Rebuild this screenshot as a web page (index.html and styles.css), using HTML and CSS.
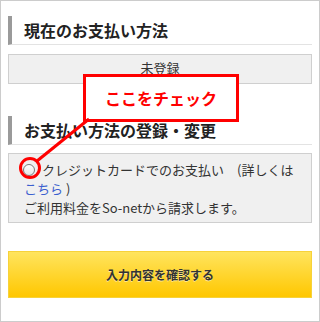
FILE: index.html
```html
<!DOCTYPE html>
<html lang="ja">
<head>
<meta charset="utf-8">
<link rel="stylesheet" href="styles.css">
</head>
<body>
<div class="page">
  <h2 class="heading">現在のお支払い方法</h2>
  <div class="current">未登録</div>

  <h2 class="heading second">お支払い方法の登録・変更</h2>
  <div class="methods">
    <label class="option"><span class="radio"></span><span>クレジットカードでのお支払い　(詳しくは <a class="link" href="#">こちら</a> )</span></label>
    <p class="note">ご利用料金をSo-netから請求します。</p>
  </div>

  <button class="submit" type="button">入力内容を確認する</button>

  <div class="callout">ここをチェック</div>
  <svg class="pointer" width="320" height="322" viewBox="0 0 320 322">
    <line x1="37" y1="161" x2="89" y2="119" stroke="#ff0000" stroke-width="3"/>
    <circle cx="30" cy="168" r="9.5" fill="none" stroke="#ff0000" stroke-width="3"/>
  </svg>
</div>
</body>
</html>
```
FILE: styles.css
```css
html, body {
  margin: 0;
  padding: 0;
  background: #fff;
}
.page {
  position: relative;
  width: 320px;
  height: 322px;
  box-sizing: border-box;
  border: 1px solid #cccccc;
  padding: 15px 7px 0;
  font-family: "Noto Sans CJK JP", "Noto Sans", sans-serif;
  color: #333;
  display: flex;
  flex-direction: column;
}
.heading {
  margin: 0;
  height: 29px;
  box-sizing: border-box;
  border-left: 4px solid #9a9a9a;
  border-bottom: 1px solid #e3e3e3;
  padding-left: 12px;
  font-size: 16px;
  font-weight: bold;
  line-height: 28px;
  color: #222;
}
.heading.second {
  margin-top: 32px;
}
.current {
  margin-top: 9px;
  height: 30px;
  box-sizing: border-box;
  border: 1px solid #cfcfcf;
  background: #f0f0f0;
  text-align: center;
  font-size: 13px;
  line-height: 25px;
  color: #333;
}
.methods {
  margin-top: 8px;
  height: 70px;
  box-sizing: border-box;
  border: 1px solid #cfcfcf;
  background: #f0f0f0;
  padding: 6px 12px 0 15px;
  font-size: 13px;
  line-height: 19px;
}
.option {
  display: block;
}
.radio {
  display: inline-block;
  width: 12px;
  height: 12px;
  box-sizing: border-box;
  border: 1px solid #7a7a7a;
  border-radius: 50%;
  background: linear-gradient(#ffffff, #e6e6e6);
  vertical-align: -1px;
  margin: 0 7px 0 -1px;
}
.link {
  color: #3b5fcf;
  text-decoration: none;
}
.note {
  margin: 0;
}
.submit {
  margin-top: 28px;
  height: 47px;
  width: 100%;
  border: 1px solid #f7d23a;
  background: linear-gradient(#ffe45e, #ffc700);
  font-family: "Noto Sans CJK JP", "Noto Sans", sans-serif;
  font-size: 12px;
  font-weight: bold;
  color: #333;
  text-shadow: 0 1px 0 rgba(255, 255, 255, 0.5);
  padding: 0;
}
.callout {
  position: absolute;
  left: 82px;
  top: 73px;
  width: 156px;
  height: 48px;
  box-sizing: border-box;
  border: 3px solid #ff0000;
  background: #fff;
  color: #ff0000;
  font-size: 16px;
  font-weight: bold;
  text-align: center;
  line-height: 42px;
}
.pointer {
  position: absolute;
  left: -1px;
  top: -1px;
  pointer-events: none;
}
```
